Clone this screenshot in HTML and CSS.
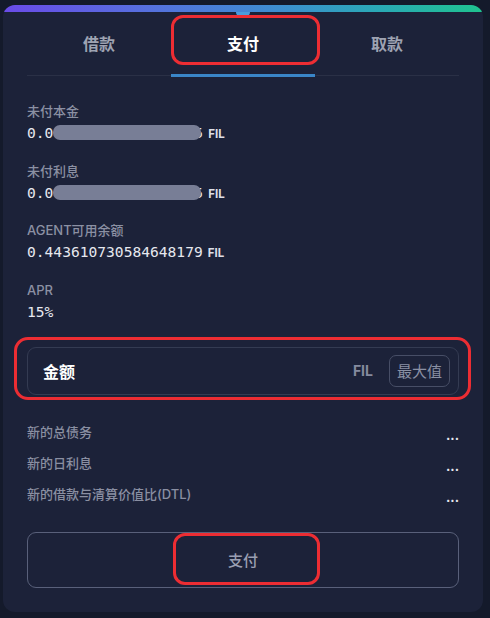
FILE: index.html
```html
<!doctype html>
<html lang="zh-CN">
<head>
  <meta charset="utf-8">
  <title>支付</title>
  <link rel="stylesheet" href="styles.css">
</head>
<body>

	<div class="card">
		<div class="bar"></div>

		<div class="tabs">
			<div class="tab">借款</div>
			<div class="tab active">支付<span class="mark"></span></div>
			<div class="tab">取款</div>
		</div>

		<div class="info">
			<div class="item">
				<div class="label">未付本金</div>
				<div class="value">0.0<span class="mask"></span>5<span class="unit">FIL</span></div>
			</div>
			<div class="item">
				<div class="label">未付利息</div>
				<div class="value">0.0<span class="mask"></span>5<span class="unit">FIL</span></div>
			</div>
			<div class="item">
				<div class="label">AGENT可用余额</div>
				<div class="value">0.443610730584648179<span class="unit">FIL</span></div>
			</div>
			<div class="item">
				<div class="label">APR</div>
				<div class="value">15%</div>
			</div>
		</div>

		<div class="amount">
			<span class="amount-label">金额</span>
			<span class="amount-unit">FIL</span>
			<button class="max">最大值</button>
			<span class="mark"></span>
		</div>

		<div class="summary">
			<div class="row"><span>新的总债务</span><span class="dots">...</span></div>
			<div class="row"><span>新的日利息</span><span class="dots">...</span></div>
			<div class="row"><span>新的借款与清算价值比(DTL)</span><span class="dots">...</span></div>
		</div>

		<div class="pay">支付<span class="mark"></span></div>
	</div>

</body>
</html>
```

FILE: styles.css
```css
body {
	margin			: 0;
	min-height		: 100vh;
	background		: #141a2b;
	font-family		: Inter, "Noto Sans CJK SC", sans-serif;
	color			: #e4e6ed;
}

.card {
	position		: relative;
	box-sizing		: border-box;
	width			: 480px;
	margin			: 5px 0 0 3px;
	padding			: 0 24px 24px;
	background		: #1c2239;
	border-radius	: 12px;
	overflow		: hidden;
}

/* gradient strip on top of the card */
.bar {
	position		: relative;
	height			: 7px;
	margin			: 0 -24px;
	background		: linear-gradient(90deg, #6a4be8 0%, #5670de 30%, #3f8bd2 55%, #2aa9b6 78%, #1fc38f 100%);
}

.bar::after {
	content			: "";
	position		: absolute;
	top				: 100%;
	left			: 233px;
	width			: 14px;
	height			: 4px;
	background		: #4a9ddc;
	border-radius	: 0 0 7px 7px;
}

/* red annotation boxes */
.mark {
	position		: absolute;
	border			: 3px solid #ec2d33;
	border-radius	: 12px;
	pointer-events	: none;
}

/* tabs */
.tabs {
	display			: grid;
	grid-template-columns: repeat(3, 1fr);
	border-bottom	: 1px solid #2a3046;
}

.tab {
	position		: relative;
	height			: 62px;
	margin-bottom	: -2px;
	display			: flex;
	align-items		: center;
	justify-content	: center;
	border-bottom	: 3px solid transparent;
	font-size		: 16px;
	font-weight		: 700;
	color			: #9ea3b2;
}

.tab.active {
	color			: #ffffff;
	border-bottom-color: #3a86c8;
}

.tab .mark {
	top				: 3px;
	left			: 0;
	right			: -5px;
	bottom			: 9px;
}

/* info list */
.info {
	display			: grid;
	row-gap			: 18.5px;
	padding-top		: 26px;
}

.label {
	font-size		: 13px;
	font-weight		: 500;
	line-height		: 18px;
	color			: #8b90a3;
}

.value {
	height			: 20px;
	margin-top		: 3px;
	font-family		: "DejaVu Sans Mono", monospace;
	font-size		: 14.6px;
	line-height		: 20px;
	color			: #e6e8ef;
	white-space		: nowrap;
}

.mask {
	position		: relative;
	display			: inline-block;
	width			: 148px;
	height			: 15px;
	margin-right	: -7px;
	vertical-align	: -2px;
	background		: #787e96;
	border-radius	: 7px;
}

.unit {
	margin-left		: 5px;
	font-family		: Inter, sans-serif;
	font-size		: 11.5px;
	font-weight		: 700;
	line-height		: 1;
	color			: #dcdee6;
}

/* amount input */
.amount {
	position		: relative;
	display			: flex;
	align-items		: center;
	height			: 48px;
	box-sizing		: border-box;
	margin-top		: 25px;
	padding			: 0 8px 0 15px;
	border			: 1px solid #343b52;
	border-radius	: 9px;
}

.amount-label {
	flex			: 1;
	font-size		: 16px;
	font-weight		: 700;
	color			: #ffffff;
}

.amount-unit {
	margin-right	: 16px;
	font-size		: 14px;
	font-weight		: 700;
	color			: #858b9f;
}

.max {
	height			: 32px;
	padding			: 0 7px;
	background		: transparent;
	border			: 1px solid #474e66;
	border-radius	: 7px;
	font-family		: inherit;
	font-size		: 15px;
	color			: #8a90a4;
}

.amount .mark {
	top				: -11px;
	bottom			: -6px;
	left			: -14px;
	right			: -13px;
	border-radius	: 14px;
}

/* summary rows */
.summary {
	display			: grid;
	row-gap			: 13px;
	margin-top		: 28px;
}

.row {
	display			: flex;
	justify-content	: space-between;
	height			: 18px;
	font-size		: 13px;
	font-weight		: 500;
	line-height		: 18px;
	color			: #8a8fa2;
}

.dots {
	align-self		: flex-end;
	line-height		: 12px;
	font-weight		: 700;
	color			: #e6e8ef;
}

/* pay button */
.pay {
	position		: relative;
	height			: 56px;
	box-sizing		: border-box;
	margin-top		: 29px;
	display			: flex;
	align-items		: center;
	justify-content	: center;
	border			: 1px solid #59607a;
	border-radius	: 9px;
	font-size		: 15px;
	font-weight		: 500;
	color			: #9a9fb2;
}

.pay .mark {
	top				: 0;
	left			: 145px;
	width			: 141px;
	height			: 46px;
}
```
